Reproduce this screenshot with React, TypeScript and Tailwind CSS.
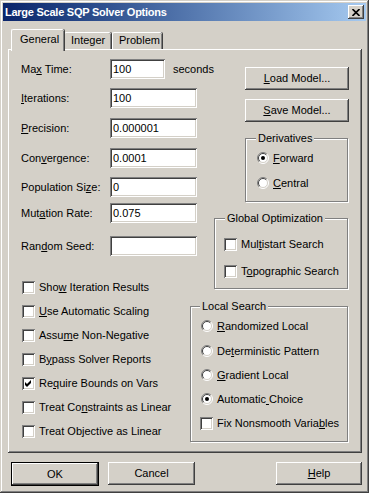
import type { ReactNode } from 'react';

const SUNKEN =
  'bg-white shadow-[inset_1px_1px_0_#808080,inset_-1px_-1px_0_#fff,inset_2px_2px_0_#404040,inset_-2px_-2px_0_#d4d0c8]';
const RAISED =
  'bg-[#d4d0c8] shadow-[inset_-1px_-1px_0_#404040,inset_1px_1px_0_#fff,inset_-2px_-2px_0_#808080,inset_2px_2px_0_#d4d0c8]';
const ETCHED = 'border border-[#808080] shadow-[1px_1px_0_#fff,inset_1px_1px_0_#fff]';

function CheckBox({ checked = false }: { readonly checked?: boolean }) {
  return (
    <span className={`inline-block shrink-0 w-[13px] h-[13px] ${SUNKEN}`}>
      {checked && (
        <svg width="13" height="13" viewBox="0 0 13 13">
          <polygon points="3,5 5,7 9,3 9,6 5,10 3,8" fill="#000" />
        </svg>
      )}
    </span>
  );
}

function Radio({ checked = false }: { readonly checked?: boolean }) {
  return (
    <svg width="12" height="12" viewBox="0 0 12 12" className="shrink-0">
      <circle cx="6" cy="6" r="5" fill="#fff" />
      <path d="M2.1 9.9 A5.5 5.5 0 0 1 9.9 2.1" stroke="#808080" fill="none" />
      <path d="M9.9 2.1 A5.5 5.5 0 0 1 2.1 9.9" stroke="#fff" fill="none" />
      <path d="M2.8 9.2 A4.5 4.5 0 0 1 9.2 2.8" stroke="#404040" fill="none" />
      <path d="M9.2 2.8 A4.5 4.5 0 0 1 2.8 9.2" stroke="#d4d0c8" fill="none" />
      {checked && <circle cx="6" cy="6" r="2" fill="#000" />}
    </svg>
  );
}

function Field({ value, className }: { readonly value: string; readonly className: string }) {
  return (
    <div className={`h-[20px] pl-[3px] flex items-center shrink-0 ${SUNKEN} ${className}`}>{value}</div>
  );
}

function Row({ label, value, className, width = 'w-[87px]', suffix }: {
  readonly label: ReactNode;
  readonly value: string;
  readonly className: string;
  readonly width?: string;
  readonly suffix?: string;
}) {
  return (
    <div className={`flex items-center h-[20px] ${className}`}>
      <span className="w-[89px] shrink-0">{label}</span>
      <Field value={value} className={width} />
      {suffix && <span className="ml-[8px] whitespace-nowrap">{suffix}</span>}
    </div>
  );
}

function CheckRow({ children, checked }: { readonly children: ReactNode; readonly checked?: boolean }) {
  return (
    <div className="flex items-center h-[24px] gap-[4px] pl-[1px] whitespace-nowrap">
      <CheckBox checked={checked} />
      <span>{children}</span>
    </div>
  );
}

function Button({ children, className }: { readonly children: ReactNode; readonly className: string }) {
  return (
    <div className={`h-[23px] flex items-center justify-center ${RAISED} ${className}`}>{children}</div>
  );
}

function Tab({ children, active }: { readonly children: ReactNode; readonly active?: boolean }) {
  if (active) {
    return (
      <div className="relative z-10 -mb-[2px] h-[22px] w-[53px] pl-[8px] pt-[3px] bg-[#d4d0c8] rounded-t-[2px] border-t border-l border-white shadow-[inset_-1px_0_0_#808080,1px_0_0_#404040]">
        {children}
      </div>
    );
  }
  return (
    <div className="h-[17px] pl-[6px] pt-[1px] bg-[#d4d0c8] rounded-t-[2px] border-t border-l border-white shadow-[inset_-1px_0_0_#808080,1px_0_0_#404040] mr-[1px]">
      {children}
    </div>
  );
}

export default function App() {
  return (
    <div className="w-[369px] h-[493px] p-[3px] bg-[#d4d0c8] text-black text-[11px] leading-[13px] font-['Liberation_Sans',Arial,sans-serif] shadow-[inset_-1px_-1px_0_#404040,inset_1px_1px_0_#d4d0c8,inset_-2px_-2px_0_#808080,inset_2px_2px_0_#fff] overflow-hidden">
      {/* title bar */}
      <div className="h-[18px] flex items-center justify-between bg-linear-to-r from-[#0a246a] to-[#a6caf0] pl-[2px] pr-[2px]">
        <span className="text-white font-bold text-[11px] tracking-[-0.25px]">Large Scale SQP Solver Options</span>
        <div className={`w-[16px] h-[14px] flex items-center justify-center ${RAISED}`}>
          <svg width="8" height="7" viewBox="0 0 8 7">
            <path d="M0.5 0 L7.5 7 M7.5 0 L0.5 7" stroke="#000" strokeWidth="1.6" />
          </svg>
        </div>
      </div>

      {/* tabs */}
      <div className="flex items-end h-[20px] mt-[8px] ml-[8px]">
        <Tab active>General</Tab>
        <div className="w-[48px]"><Tab>Integer</Tab></div>
        <div className="w-[51px]"><Tab>Problem</Tab></div>
      </div>

      {/* tab panel */}
      <div className="ml-[5px] w-[354px] h-[404px] flex pl-[13px] pr-[13px] shadow-[inset_-1px_-1px_0_#404040,inset_1px_1px_0_#fff,inset_-2px_-2px_0_#808080]">
        <div className="flex flex-col w-[169px] shrink-0">
          <Row className="mt-[10px]" label={<>Ma<u>x</u> Time:</>} value="100" width="w-[55px]" suffix="seconds" />
          <Row className="mt-[9px]" label={<><u>I</u>terations:</>} value="100" />
          <Row className="mt-[10px]" label={<><u>P</u>recision:</>} value="0.000001" />
          <Row className="mt-[10px]" label={<>Con<u>v</u>ergence:</>} value="0.0001" />
          <Row className="mt-[9px]" label={<>Population Si<u>z</u>e:</>} value="0" />
          <Row className="mt-[6px]" label={<>Mut<u>a</u>tion Rate:</>} value="0.075" />
          <Row className="mt-[13px]" label={<>Ran<u>d</u>om Seed:</>} value="" />
          <div className="mt-[19px] flex flex-col">
            <CheckRow>Sho<u>w</u> Iteration Results</CheckRow>
            <CheckRow><u>U</u>se Automatic Scaling</CheckRow>
            <CheckRow>Assu<u>m</u>e Non-Negative</CheckRow>
            <CheckRow>B<u>y</u>pass Solver Reports</CheckRow>
            <CheckRow checked>Re<u>q</u>uire Bounds on Vars</CheckRow>
            <CheckRow>Treat Co<u>n</u>straints as Linear</CheckRow>
            <CheckRow>Treat Ob<u>j</u>ective as Linear</CheckRow>
          </div>
        </div>

        <div className="flex flex-1 flex-col items-end">
          <Button className="mt-[18px] w-[104px]"><span><u>L</u>oad Model...</span></Button>
          <Button className="mt-[9px] w-[104px]"><span><u>S</u>ave Model...</span></Button>

          <fieldset className={`mt-[10px] mr-[1px] w-[103px] h-[70px] ${ETCHED}`}>
            <legend className="ml-[10px] px-[2px] bg-[#d4d0c8] leading-[13px]">Derivatives</legend>
            <div className="flex items-center h-[16px] gap-[4px] pl-[11px] mt-[5px]">
              <Radio checked /><span><u>F</u>orward</span>
            </div>
            <div className="flex items-center h-[16px] gap-[4px] pl-[11px] mt-[9px]">
              <Radio /><span><u>C</u>entral</span>
            </div>
          </fieldset>

          <fieldset className={`mt-[10px] mr-[1px] w-[134px] h-[77px] ${ETCHED}`}>
            <legend className="ml-[10px] px-[2px] bg-[#d4d0c8] leading-[13px]">Global Optimization</legend>
            <div className="flex items-center h-[16px] gap-[4px] pl-[9px] mt-[11px]">
              <CheckBox /><span>Mul<u>t</u>istart Search</span>
            </div>
            <div className="flex items-center h-[16px] gap-[4px] pl-[9px] mt-[11px]">
              <CheckBox /><span>T<u>o</u>pographic Search</span>
            </div>
          </fieldset>

          <fieldset className={`mt-[11px] mr-[1px] w-[158px] h-[142px] ${ETCHED}`}>
            <legend className="ml-[9px] px-[2px] bg-[#d4d0c8] leading-[13px]">Local Search</legend>
            <div className="flex items-center h-[16px] gap-[4px] pl-[10px] mt-[5px]">
              <Radio /><span><u>R</u>andomized Local</span>
            </div>
            <div className="flex items-center h-[16px] gap-[4px] pl-[10px] mt-[9px]">
              <Radio /><span>De<u>t</u>erministic Pattern</span>
            </div>
            <div className="flex items-center h-[16px] gap-[4px] pl-[10px] mt-[8px]">
              <Radio /><span><u>G</u>radient Local</span>
            </div>
            <div className="flex items-center h-[16px] gap-[4px] pl-[10px] mt-[8px]">
              <Radio checked /><span>Automatic<u> </u>Choice</span>
            </div>
            <div className="flex items-center h-[16px] gap-[4px] pl-[9px] mt-[8px]">
              <CheckBox /><span>Fix Nonsmooth Varia<u>b</u>les</span>
            </div>
          </fieldset>
        </div>
      </div>

      {/* bottom buttons */}
      <div className="flex mt-[9px] ml-[8px]">
        <div className={`w-[88px] h-[24px] border border-black flex items-center justify-center ${RAISED}`}>OK</div>
        <Button className="ml-[9px] w-[87px]"><span>Cancel</span></Button>
        <Button className="ml-auto mr-[4px] w-[86px]"><span><u>H</u>elp</span></Button>
      </div>
    </div>
  );
}
